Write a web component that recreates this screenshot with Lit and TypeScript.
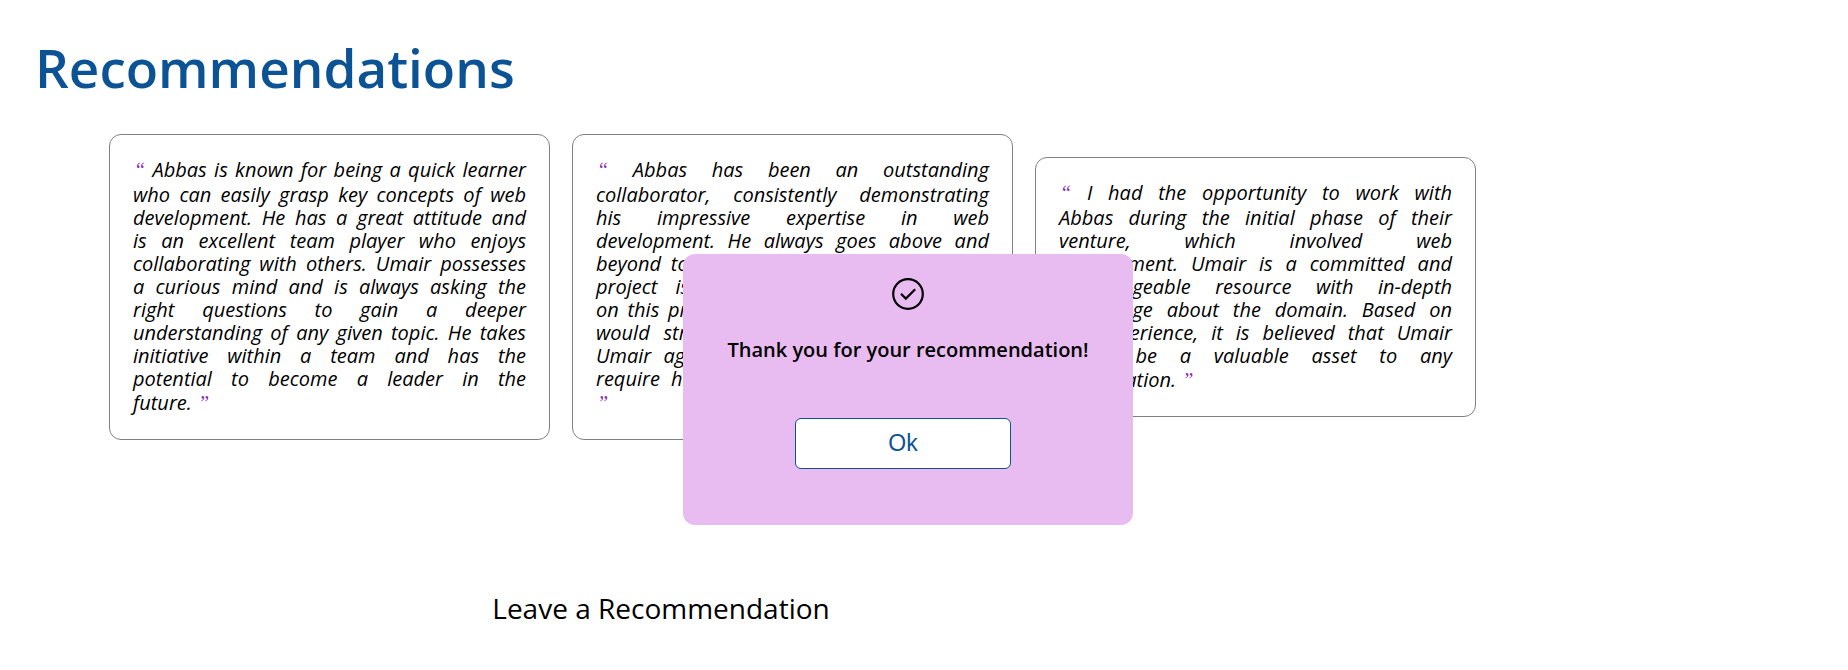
import { LitElement, html, css } from "lit";
import { customElement, property, state } from "lit/decorators.js";

const RECOMMENDATIONS: string[][] = [
  [
    "Abbas is known for being a quick learner",
    "who can easily grasp key concepts of web",
    "development. He has a great attitude and",
    "is an excellent team player who enjoys",
    "collaborating with others. Umair possesses",
    "a curious mind and is always asking the",
    "right questions to gain a deeper",
    "understanding of any given topic. He takes",
    "initiative within a team and has the",
    "potential to become a leader in the",
    "future.",
  ],
  [
    "Abbas has been an outstanding",
    "collaborator, consistently demonstrating",
    "his impressive expertise in web",
    "development. He always goes above and",
    "beyond to ensure the success of the work",
    "project is achieved. Working with him",
    "on this project was a great pleasure and I",
    "would strongly recommend working with",
    "Umair again in the future whenever you",
    "require his services for web development.",
    "",
  ],
  [
    "I had the opportunity to work with",
    "Abbas during the initial phase of their",
    "venture, which involved web",
    "development. Umair is a committed and",
    "knowledgeable resource with in-depth",
    "knowledge about the domain. Based on",
    "my experience, it is believed that Umair",
    "would be a valuable asset to any",
    "organization.",
  ],
];

@customElement("recommendation-card")
export class RecommendationCard extends LitElement {
  @property({ attribute: false }) lines: string[] = [];

  static styles = css`
    :host {
      display: block;
      box-sizing: border-box;
      width: 441px;
      padding: 22px 23px 24px;
      border: 1px solid #808080;
      border-radius: 12px;
      background: #fff;
    }
    .quote {
      margin: 0;
      font: italic 20px/23px "Trebuchet MS", "Open Sans", sans-serif;
      color: #000;
    }
    .line {
      display: block;
      text-align: justify;
      text-align-last: justify;
    }
    .line:first-child {
      line-height: 26px;
    }
    .line:last-child {
      line-height: 25px;
      text-align-last: left;
    }
    .mark {
      margin-left: 1px;
      font-family: "Liberation Serif", serif;
      font-size: 20px;
      line-height: 20px;
      color: #8a2bb5;
    }
  `;

  render() {
    const last = this.lines.length - 1;
    return html`<blockquote class="quote">
      ${this.lines.map(
        (line, i) => html`<span class="line"
          >${i === 0 ? html`<span class="mark">“</span> ` : ""}${line}${i === last
            ? html` <span class="mark">”</span>`
            : ""}</span
        >`,
      )}
    </blockquote>`;
  }
}

@customElement("app-root")
export class AppRoot extends LitElement {
  @state() private open = true;

  static styles = css`
    :host {
      display: block;
      position: relative;
      font-family: "Trebuchet MS", "Open Sans", sans-serif;
      color: #000;
    }
    .page {
      padding: 28px 35px;
    }
    .title {
      margin: 0;
      font-size: 53px;
      line-height: 80px;
      font-weight: 600;
      color: #0b5394;
    }
    .cards {
      display: flex;
      align-items: center;
      gap: 22px;
      margin-top: 26px;
      padding-left: 74px;
    }
    .card {
      flex: none;
    }
    .subtitle {
      max-width: 1252px;
      margin: 148px 0 0;
      text-align: center;
      font-size: 28px;
      line-height: 40px;
      font-weight: 400;
    }
    .overlay {
      position: absolute;
      inset: 0;
      display: flex;
      justify-content: center;
      align-items: flex-start;
      padding: 254px 32px 0 0;
    }
    .popup {
      box-sizing: border-box;
      width: 450px;
      padding: 24px 24px 56px;
      border-radius: 12px;
      background: #e8bcf0;
      display: flex;
      flex-direction: column;
      align-items: center;
    }
    .icon {
      width: 32px;
      height: 32px;
    }
    .message {
      margin: 26px 0 54px;
      font-size: 20px;
      line-height: 28px;
      font-weight: 600;
      white-space: nowrap;
    }
    .ok {
      width: 216px;
      height: 51px;
      margin-right: 10px;
      border: 1px solid #0b5394;
      border-radius: 6px;
      background: #fff;
      color: #0b5394;
      font: 23px "Liberation Sans", sans-serif;
      cursor: pointer;
    }
  `;

  render() {
    return html`
      <main class="page">
        <h1 class="title">Recommendations</h1>
        <section class="cards">
          ${RECOMMENDATIONS.map(
            (lines) => html`<recommendation-card class="card" .lines=${lines}></recommendation-card>`,
          )}
        </section>
        <h2 class="subtitle">Leave a Recommendation</h2>
      </main>
      ${this.open
        ? html`<div class="overlay">
            <div class="popup" role="dialog" aria-labelledby="message">
              <svg class="icon" viewBox="0 0 32 32" fill="none" stroke="#000" aria-hidden="true">
                <circle cx="16" cy="16" r="14.8" stroke-width="2.2" />
                <path d="M9 15.8 L13.8 20.6 L23.2 11.2" stroke-width="2.2" />
              </svg>
              <p class="message" id="message">Thank you for your recommendation!</p>
              <button class="ok" type="button" @click=${() => (this.open = false)}>Ok</button>
            </div>
          </div>`
        : ""}
    `;
  }
}
